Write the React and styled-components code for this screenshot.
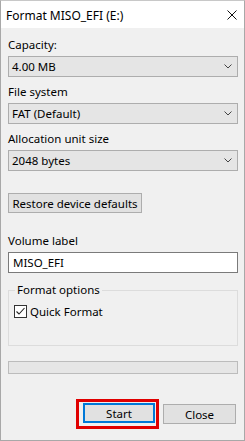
import React from 'react';
import styled, { createGlobalStyle } from 'styled-components';

const GlobalStyle = createGlobalStyle`
  html, body {
    margin: 0;
    padding: 0;
    background: #ffffff;
  }
  body {
    font-family: "Segoe UI", "Noto Sans", "Liberation Sans", sans-serif;
    font-size: 11.5px;
    color: #000;
  }
`;

const Window = styled.div`
  width: 245px;
  height: 441px;
  box-sizing: border-box;
  border: 1px solid #a8a8a8;
  border-top-color: #c8c8c8;
  background: #f0f0f0;
  display: flex;
  flex-direction: column;
  overflow: hidden;
`;

const TitleBar = styled.div`
  height: 27px;
  background: #fff;
  display: flex;
  align-items: center;
  justify-content: space-between;
  padding: 0 7px 0 5px;
  flex-shrink: 0;
  span {
    font-size: 12px;
    margin-top: 2px;
  }
`;

const Body = styled.div`
  padding: 0 6px 0 7px;
  display: flex;
  flex-direction: column;
`;

const Label = styled.div`
  line-height: 16px;
  height: 16px;
  margin-top: ${p => p.$top}px;
  margin-bottom: 3px;
  white-space: nowrap;
`;

const Select = styled.div`
  height: 21px;
  box-sizing: border-box;
  border: 1px solid #adadad;
  background: #e5e5e5;
  display: flex;
  align-items: center;
  justify-content: space-between;
  padding: 0 5px 0 3px;
  svg {
    display: block;
  }
`;

const TextInput = styled.div`
  height: 21px;
  box-sizing: border-box;
  border: 1px solid #7a7a7a;
  background: #fff;
  display: flex;
  align-items: center;
  padding: 0 4px;
`;

const Button = styled.div`
  height: 20px;
  box-sizing: border-box;
  border: ${p => (p.$focused ? '2px solid #0078d7' : '1px solid #adadad')};
  background: #e1e1e1;
  display: flex;
  align-items: center;
  justify-content: center;
  width: ${p => p.$width}px;
  white-space: nowrap;
`;

const RestoreButton = styled(Button)`
  margin-top: 22px;
`;

const Group = styled.fieldset`
  margin: 9px 0 0;
  padding: 6px 6px 0;
  height: 64px;
  box-sizing: border-box;
  border: 1px solid #dcdcdc;
  min-width: 0;
  legend {
    padding: 0 2px;
    line-height: 16px;
  }
`;

const CheckRow = styled.label`
  display: flex;
  align-items: center;
  gap: 3px;
  margin-left: -1px;
`;

const CheckBox = styled.span`
  width: 13px;
  height: 13px;
  box-sizing: border-box;
  border: 1px solid #333;
  background: #fff;
  display: flex;
  align-items: center;
  justify-content: center;
`;

const Progress = styled.div`
  margin-top: 15px;
  height: 13px;
  box-sizing: border-box;
  border: 1px solid #bcbcbc;
  background: #e6e6e6;
`;

const Footer = styled.div`
  margin-top: 25px;
  display: flex;
  align-items: center;
  justify-content: flex-end;
  gap: 4px;
  padding-right: 2px;
`;

const Highlight = styled.div`
  border: 3px solid #e00000;
  padding: 1px 1px 3px 4px;
  display: flex;
`;

const Chevron = () => (
  <svg width="8" height="5" viewBox="0 0 8 5">
    <polyline points="0.5,0.5 4,4 7.5,0.5" fill="none" stroke="#444" strokeWidth="1" />
  </svg>
);

function Dropdown({ value }) {
  return (
    <Select>
      <span>{value}</span>
      <Chevron />
    </Select>
  );
}

export default function App() {
  return (
    <>
      <GlobalStyle />
      <Window>
        <TitleBar>
          <span>Format MISO_EFI (E:)</span>
          <svg width="10" height="10" viewBox="0 0 10 10">
            <path d="M0.5 0.5 L9.5 9.5 M9.5 0.5 L0.5 9.5" stroke="#111" strokeWidth="1" />
          </svg>
        </TitleBar>
        <Body>
          <Label $top={9}>Capacity:</Label>
          <Dropdown value="4.00 MB" />
          <Label $top={7}>File system</Label>
          <Dropdown value="FAT (Default)" />
          <Label $top={7}>Allocation unit size</Label>
          <Dropdown value="2048 bytes" />
          <RestoreButton $width={134}>Restore device defaults</RestoreButton>
          <Label $top={20}>Volume label</Label>
          <TextInput>MISO_EFI</TextInput>
          <Group>
            <legend>Format options</legend>
            <CheckRow>
              <CheckBox>
                <svg width="11" height="11" viewBox="0 0 11 11">
                  <polyline points="1.5,5.5 4,8 9.5,2" fill="none" stroke="#222" strokeWidth="1.1" />
                </svg>
              </CheckBox>
              Quick Format
            </CheckRow>
          </Group>
          <Progress />
          <Footer>
            <Highlight>
              <Button $focused $width={72}>Start</Button>
            </Highlight>
            <Button $width={73}>Close</Button>
          </Footer>
        </Body>
      </Window>
    </>
  );
}
